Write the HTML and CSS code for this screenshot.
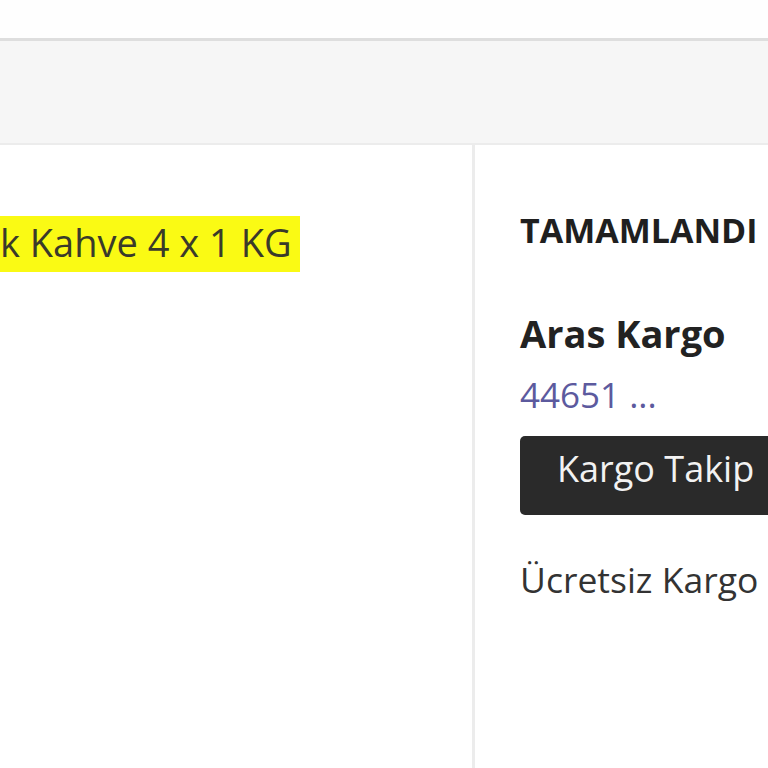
FILE: index.html
```html
<!doctype html>
<html>
	<head>
		<meta charset="utf-8" />
		<title>Sipariş</title>
		<link rel="stylesheet" href="styles.css">
	</head>
	<body>
		<div class="top_space"></div>
		<div class="table_head"></div>
		<div class="order_row">
			<div class="cell_product">
				<p class="product_name"><span class="marker">k Kahve 4 x 1 KG</span></p>
			</div>
			<div class="cell_status">
				<div class="status_title">TAMAMLANDI</div>
				<div class="cargo_name">Aras Kargo</div>
				<a class="cargo_no" href="#">44651 ...</a>
				<div class="cargo_button">Kargo Takip</div>
				<div class="cargo_note">Ücretsiz Kargo</div>
			</div>
		</div>
	</body>
</html>
```

FILE: styles.css
```css
html, body {
	margin : 0;
	padding : 0;
	background-color : #ffffff;
	font-family : "Open Sans", "Noto Sans", sans-serif;
	color : #333333;
	overflow : hidden;
}
.top_space {
	height : 38px;
	background-color : #fefefe;
}
.table_head {
	height : 102px;
	background-color : #f6f6f6;
	border-top : 3px solid #dedede;
	border-bottom : 2px solid #ececec;
}
.order_row {
	display : flex;
	height : 623px;
}
.cell_product {
	width : 472px;
	border-right : 3px solid #ececec;
	overflow : hidden;
}
.product_name {
	margin : 71px 0 0 0;
	font-size : 38px;
	white-space : nowrap;
}
.marker {
	background-color : #fafa14;
	padding : 0 8px 4px 0;
	color : #3a3a2a;
}
.cell_status {
	flex : 1;
	padding : 68px 0 0 45px;
	white-space : nowrap;
	overflow : hidden;
}
.status_title {
	font-size : 34px;
	line-height : 34px;
	font-weight : 700;
	color : #1f1f1f;
}
.cargo_name {
	margin-top : 67px;
	font-size : 38px;
	line-height : 38px;
	font-weight : 700;
	color : #222222;
}
.cargo_no {
	display : block;
	margin-top : 25px;
	font-size : 35px;
	line-height : 35px;
	color : #5c5a9e;
	text-decoration : none;
}
.cargo_button {
	margin-top : 24px;
	width : 300px;
	height : 79px;
	box-sizing : border-box;
	padding : 0 0 13px 37px;
	line-height : 66px;
	font-size : 36px;
	color : #f2f2f2;
	background-color : #2a2a2a;
	border-radius : 5px;
}
.cargo_note {
	margin-top : 46px;
	font-size : 35.5px;
	line-height : 36px;
	color : #333333;
}
```
